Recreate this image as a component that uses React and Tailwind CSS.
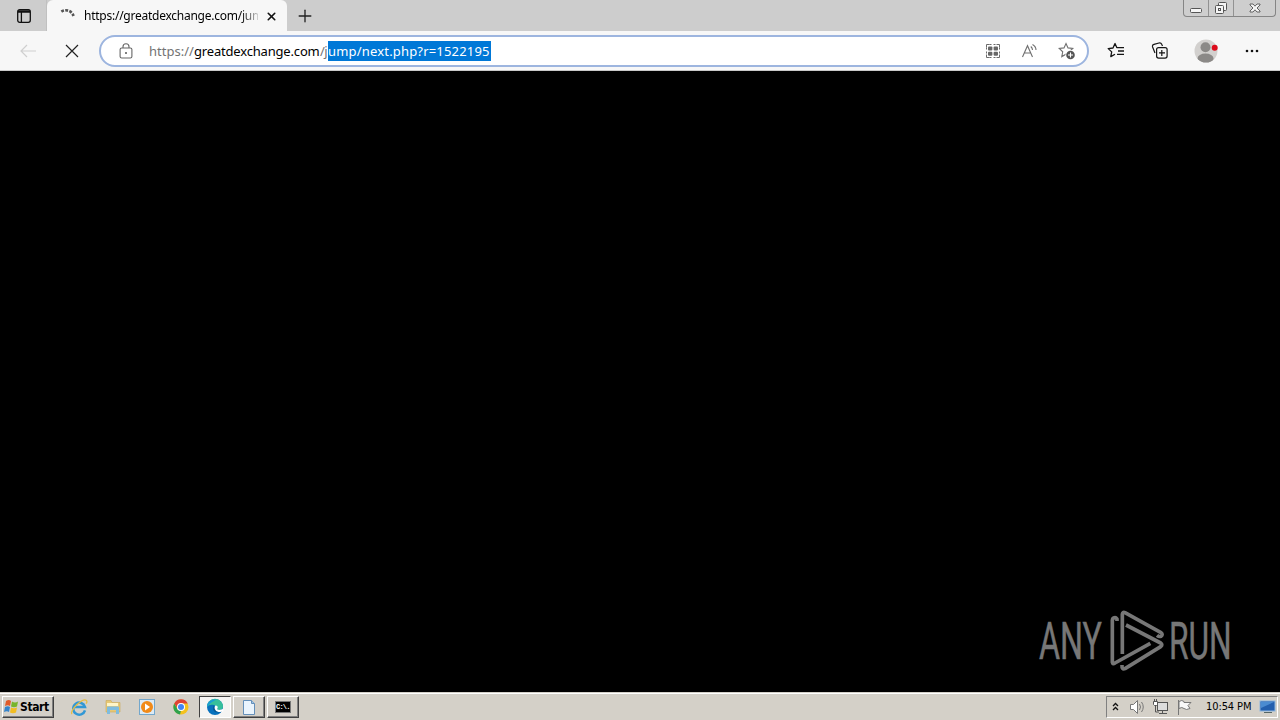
import { Plus, X } from "lucide-react";

function StarShape() {
  return <path d="M8 1.5l2 4.4 4.8.6-3.5 3.3.9 4.8L8 12.2l-4.2 2.4.9-4.8L1.2 6.5 6 5.9z" />;
}

function WindowControls() {
  return (
    <div className="flex h-[17px] w-[93px] rounded-b border border-t-0 border-[#858585] bg-[#cecece]">
      <div className="flex w-[25px] items-center justify-center border-r border-[#929292]">
        <svg width="13" height="17" fill="#f5f5f5" stroke="#555">
          <rect x=".5" y="8.5" width="11" height="4" rx="1" />
        </svg>
      </div>
      <div className="flex w-[25px] items-center justify-center border-r border-[#929292]">
        <svg width="14" height="16" fill="#f5f5f5" stroke="#555">
          <rect x="4.5" y="2.5" width="8" height="8" rx="1" />
          <rect x="1.5" y="5.5" width="8" height="8" rx="1" />
          <rect x="4.5" y="8.5" width="2" height="2" />
        </svg>
      </div>
      <div className="flex flex-1 items-center justify-center">
        <svg width="12" height="14" fill="#f5f5f5" stroke="#555" strokeWidth=".9">
          <path d="M1 3h3l2 2.2L8 3h3v1L8 7l3 3v1H8L6 8.8 4 11H1v-1l3-3-3-3z" />
        </svg>
      </div>
    </div>
  );
}

function TabStrip() {
  return (
    <div className="flex h-[31px] items-start bg-[#cdcdcd]">
      <div className="flex h-[31px] w-[47px] items-center justify-center border-r border-[#c0c0c0]">
        <svg width="14" height="14" className="mt-px ml-0.5" fill="none" stroke="#111" strokeWidth="1.3">
          <rect x=".7" y=".7" width="12.6" height="12.6" rx="2" />
          <path d="M1 2h12M1 3.2h12M4.4 3v10" />
        </svg>
      </div>
      <div className="flex h-[31px] w-[240px] items-center rounded-t-md bg-[#f7f7f7] pt-px">
        <svg width="16" height="16" className="ml-[13px] shrink-0" fill="none" stroke="#555" strokeWidth="2.7">
          <path d="M1.4 3.6A8 8 0 0 1 13.5 8" strokeDasharray="2.8 1.3" />
        </svg>
        <div className="ml-2 w-[174px] bg-linear-to-r from-black from-88% to-[#d0d0d0] bg-clip-text text-[12px] tracking-[-0.25px] whitespace-nowrap text-transparent">
          https://greatdexchange.com/jum
        </div>
        <X size={13} strokeWidth={3} className="ml-[7px] shrink-0 text-[#111]" />
      </div>
      <Plus size={20} strokeWidth={1.6} className="mt-1.5 ml-2 text-[#222]" />
      <div className="ml-auto pr-1">
        <WindowControls />
      </div>
    </div>
  );
}

function AddressBar() {
  return (
    <div className="flex h-8 w-[990px] items-center rounded-full border-2 border-[#9db5df] bg-white">
      <svg width="14" height="17" className="mt-px ml-[18px]" fill="none" stroke="#666" strokeWidth="1.1">
        <rect x="1.1" y="5" width="11.8" height="10" rx="1.6" />
        <path d="M4 5V3.7a3 3 0 0 1 6 0V5" />
        <circle cx="7" cy="10" r=".5" fill="#666" />
      </svg>
      <div className="ml-4 flex h-5 text-[13px] leading-5 whitespace-nowrap">
        <span className="w-[45px] text-[#737373]">https://</span>
        <span className="w-[126px] tracking-[-0.18px] text-black">greatdexchange.com</span>
        <span className="w-2 tracking-[-0.5px] text-[#737373]">/j</span>
        <span className="w-[163px] bg-[#0078d7] tracking-[0.18px] text-white">ump/next.php?r=1522195</span>
      </div>

      {/* page actions */}
      <div className="mr-[11px] ml-auto flex items-center gap-5">
        <svg width="16" height="16" fill="none" stroke="#6b6b6b">
          <path d="M4.5 1.5h-3v3M11.5 1.5h3v3M4.5 14.5h-3v-3M11.5 14.5h3v-3" />
          <path d="M1.5 4.5v7M14.5 4.5v7M4.5 1.5h7M4.5 14.5h7" strokeDasharray="2 2" />
          <g fill="#666" stroke="none">
            <rect x="3" y="3.5" width="4.4" height="4" rx="1" />
            <rect x="8.6" y="3.5" width="4.4" height="4" rx="1" />
            <rect x="3" y="8.7" width="4.4" height="4" rx="1" />
            <rect x="8.6" y="8.7" width="4.4" height="4" rx="1" />
          </g>
        </svg>
        <svg width="17" height="16" fill="none" stroke="#707070" strokeWidth="1.1">
          <path d="M1.5 14L6.5 2.7 11.5 14M3.3 10h6.4M9.8 3.5Q11.5 5 11.5 7M11.5 1.5Q15 3.5 15 7" />
        </svg>
        <svg width="18" height="18" className="mt-px" fill="none" stroke="#707070" strokeWidth="1.1">
          <StarShape />
          <circle cx="12.5" cy="13" r="5.1" fill="#fff" stroke="none" />
          <circle cx="12.5" cy="13" r="4.3" fill="#555" stroke="none" />
          <path d="M12.5 10.5v5M10 13h5" stroke="#fff" />
        </svg>
      </div>
    </div>
  );
}

function Toolbar() {
  return (
    <div className="flex h-10 items-center border-b border-[#c9c9c9] bg-[#f7f7f7]">
      <svg width="16" height="14" className="ml-5" fill="none" stroke="#cfcfcf" strokeWidth="1.2">
        <path d="M16 7H1M7 1L1 7l6 6" />
      </svg>
      <svg width="14" height="14" className="mr-5 ml-[29px]" stroke="#222" strokeWidth="1.2">
        <path d="M1 1l12 12M13 1L1 13" />
      </svg>
      <AddressBar />
      <svg width="18" height="18" className="mt-px ml-[18px]" fill="none" stroke="#151515" strokeWidth="1.3">
        <path d="M10 6L8 1.5 6 6l-4.8.6 3.5 3.3-.9 4.7L8 12.2" strokeLinejoin="round" />
        <path d="M10 5.7h7M11 9h6M10 12.3h7" />
      </svg>
      <svg width="18" height="18" className="mt-px ml-[26px]" fill="none" stroke="#151515" strokeWidth="1.2">
        <path d="M4 11L1.6 5Q1 3 3 2.4L8 1q2-.4 2.7 1.3L11.5 4" />
        <rect x="5.6" y="5.6" width="10.5" height="10.5" rx="2" />
        <path d="M10.8 8v6M8 10.8h6" />
      </svg>
      <svg width="24" height="24" className="ml-[25px]">
        <clipPath id="avatar">
          <circle cx="12" cy="12" r="11.5" />
        </clipPath>
        <circle cx="12" cy="12" r="11.5" fill="#d2d0ce" />
        <g clipPath="url(#avatar)" fill="#8b8987">
          <circle cx="11.5" cy="8.3" r="5" />
          <ellipse cx="11.5" cy="19.5" rx="8" ry="5" />
        </g>
        <circle cx="20.700" cy="8.8" r="3" fill="#dc0b1b" />
      </svg>
      <svg width="14" height="4" className="ml-[27px]" fill="#111">
        <circle cx="2" cy="2" r="1.3" />
        <circle cx="7" cy="2" r="1.3" />
        <circle cx="12" cy="2" r="1.3" />
      </svg>
    </div>
  );
}

function Watermark() {
  return (
    <svg width="230" height="80" viewBox="0 0 690 240" fill="none" stroke="#777" strokeWidth="11">
      <g fill="#777" strokeWidth="1.5" fontFamily="Roboto" fontSize="153">
        <text transform="translate(57 177) scale(.632 1)">ANY</text>
        <text transform="translate(447 177) scale(.622 1)">RUN</text>
      </g>
      <g strokeLinejoin="round">
        <path d="M291 63V57q-4-6-10-3-4 2-4 7V187q1 7 8 2L391 130" />
        <path d="M307 162V43q1-8 8-5L423 98q7 6 0 11-6 2-12-3" />
        <path d="M318 75L422 129q7 5 0 11L315 206q-10 4-9-11" />
      </g>
    </svg>
  );
}

function TaskButton({ active, children }) {
  return (
    <div
      className={
        active
          ? "flex h-[22px] w-8 items-center justify-center border border-t-[#404040] border-r-white border-b-white border-l-[#404040] bg-[#f5f4f2]"
          : "flex h-[22px] w-8 items-center justify-center border border-t-white border-r-[#404040] border-b-[#404040] border-l-white bg-[#d4d0c8] shadow-[inset_-1px_-1px_0_#808080]"
      }
    >
      {children}
    </div>
  );
}

function EdgeIcon() {
  return (
    <svg width="18" height="18" viewBox="0 0 18 18">
      <circle cx="9" cy="9" r="8" fill="#0871bd" />
      <path d="M1 9A8 8 0 0 1 17 8.5c0 3-3 4-5.4 3.3C12 7 4 5 1 9z" fill="#37bf9b" />
      <path d="M1 9c0-6 6-8 10-7.4C7 3 4 5 1 9z" fill="#199bd8" />
      <path d="M8 7c-3 5 1 9 7 7 0 0 1-1 1.5-2.5C12 14 8 12 8 7z" fill="#075894" />
      <path d="M9.3 7.5c2.4 0 3 1.800 2 3.200-.8 1.300 3 1.800 6 .1V13.500l-3.300.6C10 14 7.300 11 9.300 7.500z" fill="#fff" />
    </svg>
  );
}

function QuickLaunch() {
  return (
    <div className="ml-4 flex items-center gap-4">
      <svg width="18" height="18" viewBox="0 0 18 18" fill="none">
        <path d="M15 12.3A6 6 0 1 1 15 9H4" stroke="#3298d5" strokeWidth="2.5" />
        <path d="M2 16C-1 13 13-1 16.5 2.5 17.5 4 16 5.6 16 5.6" stroke="#e6bd45" strokeWidth="1.3" />
      </svg>
      <svg width="18" height="18" viewBox="0 0 18 18">
        <path d="M2 2.5h5l1 2h8V14H2z" fill="#e7c875" stroke="#c9aa58" strokeWidth=".6" />
        <path d="M3 5h11v3H3z" fill="#fff5c7" />
        <path d="M3 16V9.5q0-1 1-1h10q1 0 1 1V16h-3v-4H6v4z" fill="#7ebcdf" />
      </svg>
      <svg width="18" height="18" viewBox="0 0 18 18">
        <rect x="1.5" y="1.5" width="15" height="15" fill="#dceaf5" stroke="#73a7cc" />
        <circle cx="9" cy="9" r="6" fill="#f18a19" />
        <path d="M7 5.5l5 3.5-5 3.5z" fill="#fff" />
      </svg>
      <svg width="18" height="18" viewBox="0 0 18 18">
        <circle cx="9" cy="9" r="7.5" fill="#f4c21d" />
        <path d="M2.2 5.5A7.5 7.5 0 0 1 15.8 5.5H9L5.7 10.8z" fill="#df4335" />
        <path d="M2.2 5.5L6 12l3 .5-1 4A7.5 7.5 0 0 1 2.2 5.5z" fill="#2fa24d" />
        <circle cx="9" cy="9" r="4" fill="#fff" />
        <circle cx="9" cy="9" r="3" fill="#4285f4" />
      </svg>
    </div>
  );
}

function Tray() {
  return (
    <div className="ml-auto flex h-[22px] w-[172px] items-center border border-t-[#808080] border-r-white border-b-white border-l-[#808080]">
      <svg width="7" height="10" className="ml-[5px]" fill="none" stroke="#111" strokeWidth="1.3">
        <path d="M1 4l2.5-2.5L6 4M1 8l2.5-2.5L6 8" />
      </svg>
      <svg width="17" height="16" className="ml-[10px]" fill="#fff" stroke="#777">
        <path d="M1.5 5.5h3l4-4v13l-4-4h-3z" />
        <path d="M10.5 5q2 3 0 6M12.5 3q3.5 5 0 10" fill="none" />
      </svg>
      <svg width="18" height="18" className="ml-[6px]" fill="#ddd" stroke="#555">
        <rect x="5.5" y="4.5" width="10" height="8" />
        <path d="M10.5 13v2M7 15.5h8M3.5 8v6H7" fill="none" />
        <path d="M1.5 3.5h4v3l-1 1h-2l-1-1zM2.5 1v2M4.5 1v2" fill="#fff" />
      </svg>
      <svg width="17" height="17" className="ml-[6px]" fill="#f8f8f8" stroke="#777">
        <path d="M2.5 1v15M3 2.5q3-2 5 0v1h7l-3 3 2 3q-4 2-6 0-2-2-5 0z" />
      </svg>
      <span className="ml-[13px] w-[47px] pt-px font-['DejaVu_Sans_Condensed',sans-serif] text-[11px] tracking-[-0.1px] whitespace-nowrap">
        10:54 PM
      </span>
      <svg width="17" height="14" className="ml-[6px]">
        <rect x="1" y="1" width="15" height="10" fill="#245fae" stroke="#8cb6df" />
        <path d="M2 2h13L2 8z" fill="#4b8bd1" />
        <path d="M5 12h8v1H5z" fill="#566" />
      </svg>
    </div>
  );
}

function Taskbar() {
  return (
    <div className="flex h-7 items-start border-t border-[#d4d0c8] bg-[#d4d0c8] pr-0.5 pl-0.5 shadow-[inset_0_1px_0_white]">
      <div className="flex w-full items-center pt-[3px]">
        <div className="flex h-[22px] w-[52px] items-center border border-t-white border-r-[#404040] border-b-[#404040] border-l-white shadow-[inset_-1px_-1px_0_#808080]">
          <svg width="16" height="16" viewBox="0 0 16 16" className="ml-px shrink-0">
            <path d="M2 2q3-2 5 0L6 7Q4 5.5 1 7z" fill="#e15b29" />
            <path d="M8 2.5q3 2 6 0l-1 5q-3 1.5-6 0z" fill="#78b52b" />
            <path d="M1 8q3-1.5 5 0l-1 5q-2-1.5-5 0z" fill="#3584cb" />
            <path d="M7 8.5q3 1.5 6 0l-1 5q-3 1.5-6 0z" fill="#f2bd22" />
          </svg>
          <span className="font-['DejaVu_Sans_Condensed',sans-serif] text-[12px] font-bold tracking-[-0.4px] whitespace-nowrap">
            Start
          </span>
        </div>
        <QuickLaunch />
        <div className="ml-[9px] flex gap-0.5">
          <TaskButton active>
            <EdgeIcon />
          </TaskButton>
          <TaskButton>
            <svg width="16" height="17" fill="#eaf4fd" stroke="#648fb9">
              <path d="M2.5 1.5h8l3 3v11h-11z" />
              <path d="M10.5 1.5v3h3" fill="#9dc5e8" />
            </svg>
          </TaskButton>
          <TaskButton>
            <div className="h-[12px] w-4 border border-[#777] bg-black font-['Liberation_Mono',monospace] text-[7px] leading-[10px] font-bold tracking-[-0.8px] text-white">
              C:\.
            </div>
          </TaskButton>
        </div>
        <Tray />
      </div>
    </div>
  );
}

export default function App() {
  return (
    <div className="flex h-screen w-full flex-col overflow-hidden bg-black font-['Noto_Sans',sans-serif]">
      <TabStrip />
      <Toolbar />
      <main className="flex flex-1 items-end justify-end bg-black pr-[30px] pb-[12px]">
        <Watermark />
      </main>
      <Taskbar />
    </div>
  );
}
